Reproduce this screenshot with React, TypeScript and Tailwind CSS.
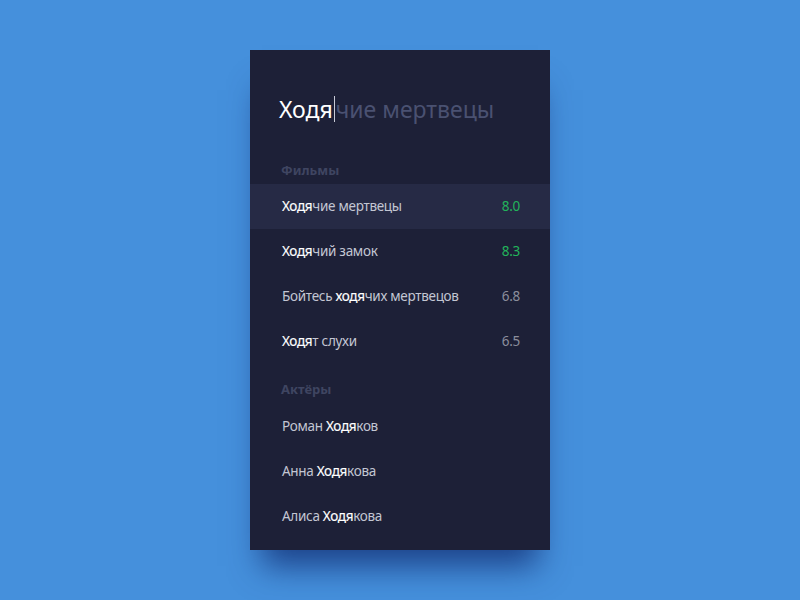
import React from "react";

type Row = { pre?: string; hit: string; post: string; rating?: string; top?: boolean };

const FILMS: Row[] = [
  { hit: "Ходя", post: "чие мертвецы", rating: "8.0", top: true },
  { hit: "Ходя", post: "чий замок", rating: "8.3", top: true },
  { pre: "Бойтесь ", hit: "ходя", post: "чих мертвецов", rating: "6.8" },
  { hit: "Ходя", post: "т слухи", rating: "6.5" },
];

const ACTORS: Row[] = [
  { pre: "Роман ", hit: "Ходя", post: "ков" },
  { pre: "Анна ", hit: "Ходя", post: "кова" },
  { pre: "Алиса ", hit: "Ходя", post: "кова" },
];

function ResultRow({ row, active }: { row: Row; active?: boolean }) {
  return (
    <div
      className={`flex h-[45px] items-center justify-between pl-[32px] pr-[30px] text-[13.5px] tracking-[-0.3px] ${
        active ? "bg-[#262a45]" : ""
      }`}
    >
      <span className="text-[#c3c6d3]">
        {row.pre}
        <span className="text-white [-webkit-text-stroke:0.15px_white]">{row.hit}</span>
        {row.post}
      </span>
      {row.rating && (
        <span className={row.top ? "text-[#22b35b]" : "text-[#8b8e9c]"}>{row.rating}</span>
      )}
    </div>
  );
}

function SectionTitle({ children }: { children: React.ReactNode }) {
  return (
    <div className="h-[20px] pl-[31px] text-[13px] font-bold leading-[20px] text-[#3f4561]">
      {children}
    </div>
  );
}

export default function App() {
  return (
    <div
      className="flex h-[600px] w-full items-center justify-center bg-[#4590dc]"
      style={{ fontFamily: '"Noto Sans", "Open Sans", sans-serif' }}
    >
      <div className="flex h-[500px] w-[300px] flex-col bg-[#1d2037] shadow-[0_28px_30px_-12px_rgba(15,40,110,0.75)]">
        <div className="flex items-center pl-[29px] pt-[44px] text-[23px] leading-[30px]">
          <span className="text-white">Ходя</span>
          <span className="mx-px h-[26px] w-px bg-[#c8cad6]" />
          <span className="text-[#4a5171]">чие мертвецы</span>
        </div>

        <div className="mt-[36px]">
          <SectionTitle>Фильмы</SectionTitle>
        </div>
        <div className="mt-[4px]">
          {FILMS.map((r, i) => (
            <ResultRow key={i} row={r} active={i === 0} />
          ))}
        </div>

        <div className="mt-[15px]">
          <SectionTitle>Актёры</SectionTitle>
        </div>
        <div className="mt-[5px]">
          {ACTORS.map((r, i) => (
            <ResultRow key={i} row={r} />
          ))}
        </div>
      </div>
    </div>
  );
}
